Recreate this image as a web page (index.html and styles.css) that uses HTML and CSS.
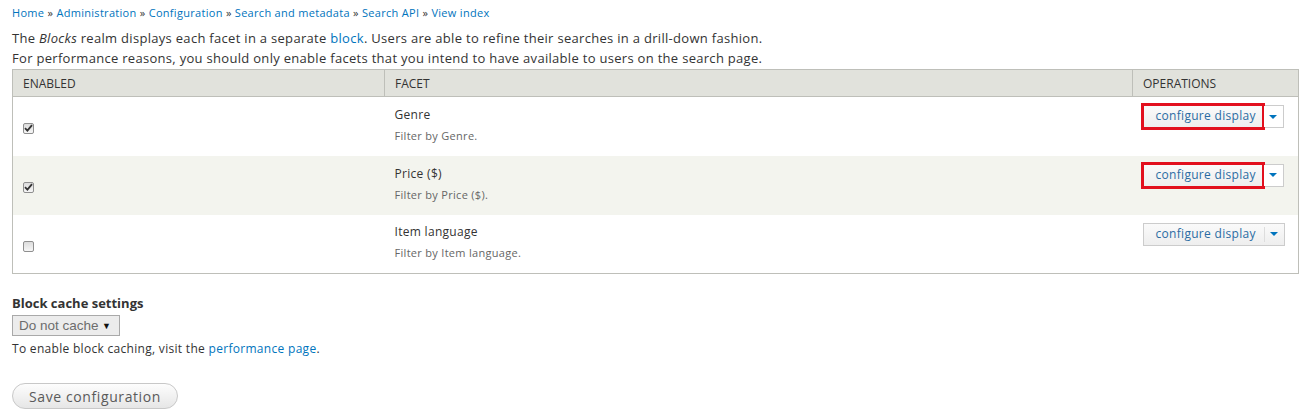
FILE: index.html
```html
<!DOCTYPE html>
<html lang="en">
<head>
    <meta charset="UTF-8">
    <meta name="viewport" content="width=device-width, initial-scale=1.0">
    <title>View index</title>
    <link rel="stylesheet" href="styles.css">
</head>
<body>
    <div class="page">
        <div class="breadcrumb">
            <a href="#">Home</a> » <a href="#">Administration</a> » <a href="#">Configuration</a> » <a href="#">Search and metadata</a> » <a href="#">Search API</a> » <a href="#">View index</a>
        </div>
        <p class="intro">
            The <em>Blocks</em> realm displays each facet in a separate <a href="#">block</a>. Users are able to refine their searches in a drill-down fashion.<br>
            For performance reasons, you should only enable facets that you intend to have available to users on the search page.
        </p>

        <table class="facets">
            <colgroup>
                <col class="col-enabled">
                <col>
                <col class="col-ops">
            </colgroup>
            <thead>
                <tr>
                    <th>Enabled</th>
                    <th>Facet</th>
                    <th>Operations</th>
                </tr>
            </thead>
            <tbody>
                <tr>
                    <td><span class="check checked"><svg width="9" height="8" viewBox="0 0 9 8"><path d="M1 4.2 L3.4 6.6 L8 1.2" fill="none" stroke="#333" stroke-width="1.8"/></svg></span></td>
                    <td>
                        <div class="facet-name">Genre</div>
                        <div class="facet-desc">Filter by Genre.</div>
                    </td>
                    <td class="ops">
                        <div class="dropbutton">
                            <a href="#" class="main marked">configure display</a>
                            <span class="toggle"><span class="arrow"></span></span>
                        </div>
                    </td>
                </tr>
                <tr class="even">
                    <td><span class="check checked"><svg width="9" height="8" viewBox="0 0 9 8"><path d="M1 4.2 L3.4 6.6 L8 1.2" fill="none" stroke="#333" stroke-width="1.8"/></svg></span></td>
                    <td>
                        <div class="facet-name">Price ($)</div>
                        <div class="facet-desc">Filter by Price ($).</div>
                    </td>
                    <td class="ops">
                        <div class="dropbutton">
                            <a href="#" class="main marked">configure display</a>
                            <span class="toggle"><span class="arrow"></span></span>
                        </div>
                    </td>
                </tr>
                <tr>
                    <td><span class="check"></span></td>
                    <td>
                        <div class="facet-name">Item language</div>
                        <div class="facet-desc">Filter by Item language.</div>
                    </td>
                    <td class="ops">
                        <div class="dropbutton">
                            <a href="#" class="main">configure display</a>
                            <span class="toggle joined"><span class="arrow"></span></span>
                        </div>
                    </td>
                </tr>
            </tbody>
        </table>

        <div class="cache">
            <label class="cache-label">Block cache settings</label>
            <div class="select"><span>Do not cache</span><span class="select-arrow">▼</span></div>
            <div class="cache-desc">To enable block caching, visit the <a href="#">performance page</a>.</div>
        </div>

        <button class="save">Save configuration</button>
    </div>
</body>
</html>
```

FILE: styles.css
```css
body {
    margin: 0;
    font-family: "Open Sans", "DejaVu Sans", sans-serif;
    letter-spacing: 0.3px;
    color: #333;
    background: #fff;
}

a {
    color: #0074bd;
    text-decoration: none;
}

.page {
    padding: 6px 0 0 12px;
}

.breadcrumb {
    font-size: 11px;
    line-height: 14px;
    color: #333;
}

.intro {
    margin: 8px 0 1px;
    font-size: 13px;
    line-height: 20px;
}

.facets {
    width: 100%;
    border-collapse: collapse;
    table-layout: fixed;
    border: 1px solid #bebfb9;
    font-size: 12px;
}

.col-enabled {
    width: 372px;
}

.col-ops {
    width: 166px;
}

th {
    background-color: #e1e2dc;
    text-align: left;
    font-weight: normal;
    text-transform: uppercase;
    letter-spacing: 0;
    font-size: 12px;
    height: 26px;
    padding: 0 10px;
    border-bottom: 1px solid #bebfb9;
    border-left: 1px solid #bebfb9;
}

td {
    height: 59px;
    padding: 0 10px;
    vertical-align: middle;
    box-sizing: border-box;
}

tr.even td {
    background-color: #f3f4ee;
}

.check {
    display: inline-block;
    width: 11px;
    height: 11px;
    box-sizing: border-box;
    border: 1px solid #8f8f8f;
    border-radius: 2px;
    background: linear-gradient(#dcdcdc, #f6f6f6);
    vertical-align: middle;
    position: relative;
    top: 1px;
}

.check svg {
    display: block;
}

.facet-name {
    line-height: 18px;
    margin-top: -2px;
}

.facet-desc {
    font-size: 11px;
    line-height: 18px;
    margin-top: 3px;
    color: #666;
}

td.ops {
    vertical-align: top;
    padding-top: 8px;
}

.dropbutton {
    display: inline-flex;
    height: 23px;
    box-sizing: border-box;
    border: 1px solid #ccc;
    background: linear-gradient(#fafafa, #eeeeee);
}

.dropbutton .main {
    display: block;
    width: 120px;
    line-height: 20px;
    padding: 0 0 0 12px;
    box-sizing: border-box;
    font-size: 12px;
    color: #2b6ca3;
}

.dropbutton .main.marked {
    outline: 3px solid #e2101e;
    outline-offset: 0;
    background: linear-gradient(#fafafa, #eeeeee);
    width: 118px;
    margin-right: 2px;
}

.toggle {
    display: flex;
    align-items: center;
    justify-content: center;
    width: 19px;
    background: #fff;
}

.toggle.joined {
    background: transparent;
    border-left: 1px solid #ddd;
    margin: 3px 0;
}

.arrow {
    width: 0;
    height: 0;
    border-left: 4px solid transparent;
    border-right: 4px solid transparent;
    border-top: 4px solid #0074bd;
}

.cache {
    margin-top: 20px;
}

.cache-label {
    display: block;
    font-weight: bold;
    font-size: 13px;
    line-height: 18px;
    letter-spacing: 0;
}

.select {
    display: flex;
    align-items: center;
    justify-content: space-between;
    width: 108px;
    height: 21px;
    box-sizing: border-box;
    margin-top: 3px;
    padding: 0 8px 0 6px;
    border: 1px solid #a9a9a9;
    background-color: #ececec;
    font-family: "Liberation Sans", Arial, sans-serif;
    font-size: 13.5px;
    letter-spacing: 0;
    color: #6d6d6d;
}

.select-arrow {
    font-size: 9px;
    color: #111;
}

.cache-desc {
    font-size: 12px;
    line-height: 16px;
    margin-top: 5px;
}

.save {
    margin-top: 26px;
    width: 166px;
    height: 26px;
    border: 1px solid #c8c8c8;
    border-radius: 20px;
    background: linear-gradient(#fdfdfd, #e6e6e6);
    font-family: "Open Sans", "DejaVu Sans", sans-serif;
    font-size: 14px;
    letter-spacing: 0.6px;
    color: #5a5a5a;
    padding: 0;
}
```
